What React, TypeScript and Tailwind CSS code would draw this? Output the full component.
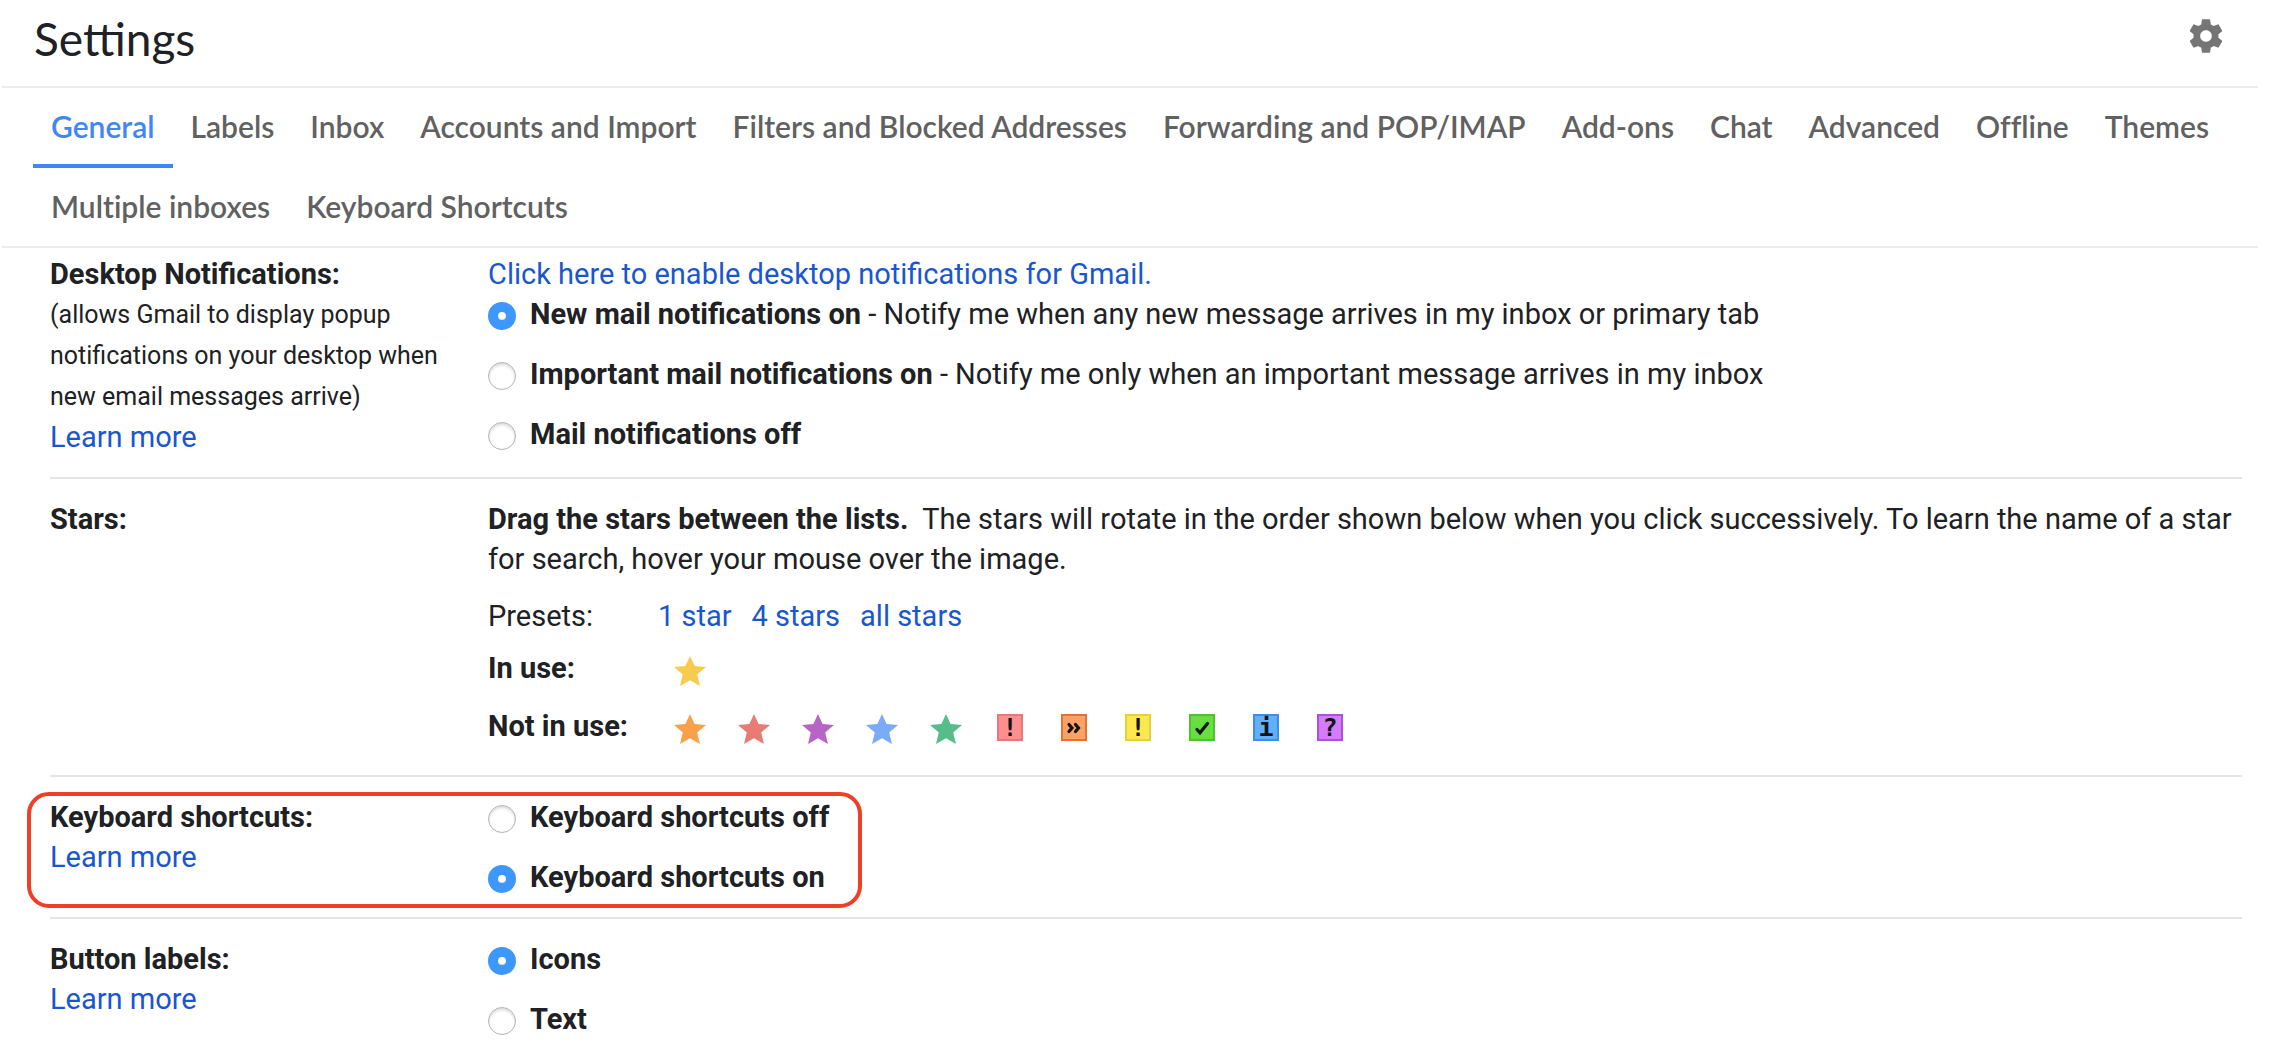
import React from "react";

const tabs = [
  "General",
  "Labels",
  "Inbox",
  "Accounts and Import",
  "Filters and Blocked Addresses",
  "Forwarding and POP/IMAP",
  "Add-ons",
  "Chat",
  "Advanced",
  "Offline",
  "Themes",
  "Multiple inboxes",
  "Keyboard Shortcuts",
];

const linkClass = "text-[#1a56cf] hover:underline";

function Link({ children }: { children: React.ReactNode }) {
  return (
    <a href="#" className={linkClass}>
      {children}
    </a>
  );
}

function Radio({
  name,
  title,
  note,
  checked,
}: {
  name: string;
  title: string;
  note?: string;
  checked?: boolean;
}) {
  return (
    <label className="flex items-start gap-[14px]">
      <input
        type="radio"
        name={name}
        defaultChecked={checked}
        className="mt-2 size-7 shrink-0 appearance-none rounded-full border border-[#b4b4b4] bg-white shadow-[inset_0_2px_3px_rgba(0,0,0,0.15)] checked:border-[10px] checked:border-[#3e97fd] checked:shadow-[inset_0_-1px_1px_rgba(0,0,0,0.15)]"
      />
      <span>
        <b className="font-bold">{title}</b>
        {note && <> - {note}</>}
      </span>
    </label>
  );
}

function Row({
  title,
  detail,
  learnMore,
  className,
  children,
}: {
  title: string;
  detail?: string;
  learnMore?: boolean;
  className: string;
  children: React.ReactNode;
}) {
  return (
    <section className={className}>
      <div className="w-[438px] shrink-0 pr-8">
        <h2 className="font-bold">{title}</h2>
        {detail && <p className="text-[25px] leading-[41px]">{detail}</p>}
        {learnMore && <Link>Learn more</Link>}
      </div>
      <div className="min-w-0 flex-1">{children}</div>
    </section>
  );
}

function Star({ label, className }: { label: string; className: string }) {
  return (
    <svg role="img" aria-label={label} viewBox="0 0 32 32" className={className}>
      <path
        fill="currentColor"
        d="M16 0l4.6 10L32 11l-8.8 7.4L26 30l-10-5.8L6 30l2.8-11.6L0 11l11.4-1z"
      />
    </svg>
  );
}

const stars = [
  { label: "orange-star", className: "size-8 text-[#f9a04a]" },
  { label: "red-star", className: "size-8 text-[#e67c73]" },
  { label: "purple-star", className: "size-8 text-[#b665c6]" },
  { label: "blue-star", className: "size-8 text-[#7baaf7]" },
  { label: "green-star", className: "size-8 text-[#57bb8a]" },
];

const badges = [
  { label: "red-bang", mark: "!", className: "border-[#e87779] bg-[#fd8f8f]" },
  { label: "orange-guillemet", mark: "", path: "M6 7.5l3 3.5-3 3.5M12.5 7.5l3 3.5-3 3.5", className: "border-[#e6702f] bg-[#fda265]" },
  { label: "yellow-bang", mark: "!", className: "border-[#e5d045] bg-[#fde94e]" },
  { label: "green-check", mark: "", path: "M6 12.5l3 3.3L16.5 6.5", className: "border-[#4cc234] bg-[#67df41]" },
  { label: "blue-info", mark: "i", className: "border-[#3b8fe6] bg-[#5fb0fd]" },
  { label: "purple-question", mark: "?", className: "border-[#ad50e0] bg-[#d57bff]" },
];

function Badge({
  label,
  mark,
  path,
  className,
}: {
  label: string;
  mark: string;
  path?: string;
  className: string;
}) {
  return (
    <span
      role="img"
      aria-label={label}
      className={
        "flex h-[27px] w-[26px] items-center justify-center border-2 font-['DejaVu_Sans_Mono',monospace] text-[25px] leading-[24px] font-bold text-[#151515] " +
        className
      }
    >
      {mark || (
        <svg viewBox="0 0 22 22" className="size-[22px]">
          <path
            d={path}
            fill="none"
            stroke="currentColor"
            strokeWidth="3.2"
            strokeLinecap="round"
          />
        </svg>
      )}
    </span>
  );
}

export default function App() {
  return (
    <main className="bg-white font-['Roboto',sans-serif] text-[29px] leading-[40px] text-[#202124]">
      <div className="mr-[22px] ml-0.5">
        <header className="flex items-start justify-between border-b-2 border-[#eaeef1] px-8 pb-2">
          <h1 className="font-['Lato',sans-serif] text-[46px] leading-[78px]">Settings</h1>
          <button type="button" aria-label="Settings menu" className="mt-4 text-[#757575]">
            <svg viewBox="0 0 24 24" className="size-10" fill="currentColor">
              <path d="M19.43 12.98c.04-.32.07-.64.07-.98s-.03-.66-.07-.98l2.11-1.65c.19-.15.24-.42.12-.64l-2-3.46c-.12-.22-.39-.3-.61-.22l-2.49 1c-.52-.4-1.08-.73-1.69-.98l-.38-2.65C14.46 2.18 14.25 2 14 2h-4c-.25 0-.46.18-.49.42l-.38 2.65c-.61.25-1.17.59-1.69.98l-2.49-1c-.23-.09-.49 0-.61.22l-2 3.46c-.13.22-.07.49.12.64l2.11 1.65c-.04.32-.07.65-.07.98s.03.66.07.98l-2.11 1.65c-.19.15-.24.42-.12.64l2 3.46c.12.22.39.3.61.22l2.49-1c.52.4 1.08.73 1.69.98l.38 2.65c.03.24.24.42.49.42h4c.25 0 .46-.18.49-.42l.38-2.65c.61-.25 1.17-.59 1.69-.98l2.49 1c.23.09.49 0 .61-.22l2-3.46c.12-.22.07-.49-.12-.64l-2.11-1.65zM12 15.5c-1.93 0-3.5-1.57-3.5-3.5s1.57-3.5 3.5-3.5 3.5 1.57 3.5 3.5-1.57 3.5-3.5 3.5z" />
            </svg>
          </button>
        </header>

        <nav className="border-b-2 border-[#eaeef1] pl-[31px]">
          <ul className="-mb-0.5 flex flex-wrap font-['Lato',sans-serif] text-[30px] leading-[76px] font-semibold text-[#616161] [font-variant-ligatures:none]">
            {tabs.map((tab, i) => (
              <li key={tab}>
                <a
                  href="#"
                  aria-current={i === 0 ? "page" : undefined}
                  className={
                    i === 0
                      ? "block border-b-4 border-[#4285f4] px-[18px] text-[#4285f4]"
                      : "block border-b-4 border-transparent px-[18px]"
                  }
                >
                  {tab}
                </a>
              </li>
            ))}
          </ul>
        </nav>

        <div className="mr-4 ml-12">
          <Row
            title="Desktop Notifications:"
            detail="(allows Gmail to display popup notifications on your desktop when new email messages arrive)"
            learnMore
            className="flex border-b-2 border-[#e5e5e5] pt-1.5 pb-5"
          >
            <Link>Click here to enable desktop notifications for Gmail.</Link>
            <div className="flex flex-col gap-5">
              <Radio
                name="mail"
                title="New mail notifications on"
                note="Notify me when any new message arrives in my inbox or primary tab"
                checked
              />
              <Radio
                name="mail"
                title="Important mail notifications on"
                note="Notify me only when an important message arrives in my inbox"
              />
              <Radio name="mail" title="Mail notifications off" />
            </div>
          </Row>

          <Row title="Stars:" className="flex border-b-2 border-[#e5e5e5] pt-5 pb-[29px]">
            <p>
              <b className="font-bold">Drag the stars between the lists.</b>
              {"\u00a0 "}The stars will rotate in the order shown below when you click
              successively. To learn the name of a star for search, hover your mouse over the
              image.
            </p>
            <div className="mt-[17px] flex">
              <span className="w-[170px]">Presets:</span>
              <div className="flex gap-5">
                <Link>1 star</Link>
                <Link>4 stars</Link>
                <Link>all stars</Link>
              </div>
            </div>
            <div className="mt-3 flex">
              <b className="w-[170px] font-bold">In use:</b>
              <div className="flex items-end pl-4">
                <Star label="yellow-star" className="size-8 text-[#f7cb4d]" />
              </div>
            </div>
            <div className="mt-[18px] flex">
              <b className="w-[170px] font-bold">Not in use:</b>
              <ul className="flex items-end pl-4">
                {stars.map((s) => (
                  <li key={s.label} className="w-16">
                    <Star {...s} />
                  </li>
                ))}
                {badges.map((b) => (
                  <li key={b.label} className="h-8 w-16 pl-[3px]">
                    <Badge {...b} />
                  </li>
                ))}
              </ul>
            </div>
          </Row>

          <Row
            title="Keyboard shortcuts:"
            learnMore
            className="relative flex border-b-2 border-[#e5e5e5] py-5"
          >
            <div className="flex flex-col gap-5">
              <Radio name="keyboard" title="Keyboard shortcuts off" />
              <Radio name="keyboard" title="Keyboard shortcuts on" checked />
            </div>
            <div className="pointer-events-none absolute top-[15px] bottom-[9px] -left-[23px] w-[835px] rounded-[22px] border-4 border-[#ee3f27]" />
          </Row>

          <Row title="Button labels:" learnMore className="flex pt-5 pb-2">
            <div className="flex flex-col gap-5">
              <Radio name="labels" title="Icons" checked />
              <Radio name="labels" title="Text" />
            </div>
          </Row>
        </div>
      </div>
    </main>
  );
}
